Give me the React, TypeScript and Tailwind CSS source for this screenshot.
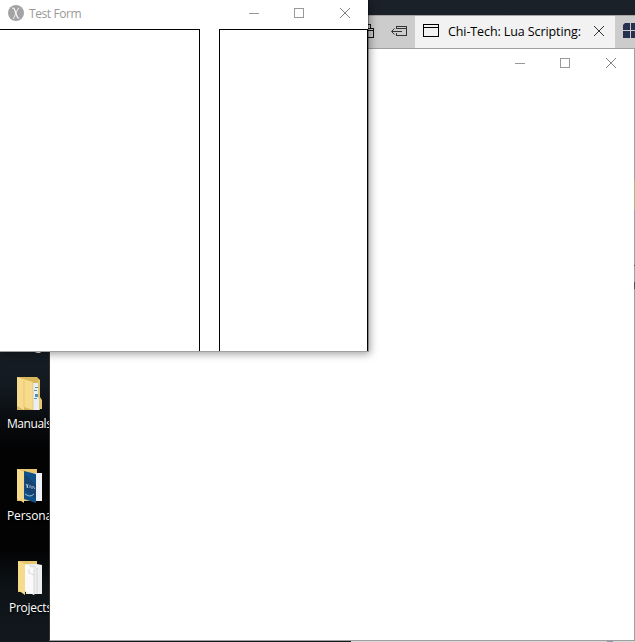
import type { ReactNode } from "react";

function WindowControls({ className = "" }: { className?: string }) {
  return (
    <div className={`flex items-center text-[#999] ${className}`}>
      <svg width="46" height="26" className="shrink-0" shapeRendering="crispEdges">
        <path d="M18 13.5h10" stroke="currentColor" />
      </svg>
      <svg width="45" height="26" className="shrink-0" shapeRendering="crispEdges">
        <rect x="17.5" y="8.5" width="9" height="9" fill="none" stroke="currentColor" />
      </svg>
      <svg width="46" height="26" className="shrink-0">
        <path d="M18 8l10 10M28 8l-10 10" stroke="#858585" strokeWidth="1" />
      </svg>
    </div>
  );
}

function DesktopItem({ label, className, labelClass, children }: { label: string; className: string; labelClass: string; children: ReactNode }) {
  return (
    <div className={`absolute flex w-[60px] flex-col text-white ${className}`}>
      <svg width="28" height="36" viewBox="0 0 28 36" className="ml-[9px]">
        {children}
      </svg>
      <span className={`mt-[4px] whitespace-nowrap text-[12px] leading-4 [text-shadow:1px_1px_2px_#000] ${labelClass}`}>{label}</span>
    </div>
  );
}

function TestForm() {
  return (
    <section className="absolute left-0 top-0 flex h-[352px] w-[369px] flex-col border-b border-r border-b-[#a0a0a0] border-r-[rgba(0,0,0,0.3)] bg-white bg-clip-padding shadow-[1px_2px_8px_rgba(0,0,0,0.38)]">
      <header className="flex h-[29px] shrink-0 items-start">
        <svg width="16" height="16" viewBox="0 0 16 16" className="ml-2 mt-[5px]">
          <circle cx="8" cy="8" r="8" fill="#a3a3a3" />
          <path d="M4.3 3.2Q6 2.6 6.8 5.2L9.1 11.5Q9.8 13.6 11.2 12.8" fill="none" stroke="#fff" strokeWidth="1.1" />
          <path d="M10.8 2.8Q8.7 6 7.8 8.3L5.4 14" fill="none" stroke="#fff" strokeWidth=".8" />
        </svg>
        <span className="ml-[5px] mt-[5px] text-[12px] leading-[18px] tracking-[-0.4px] text-[#999]">Test Form</span>
        <WindowControls className="ml-auto mr-0" />
      </header>
      <div className="flex min-h-0 flex-1 justify-between">
        <div className="w-[200px] border-r border-t border-black" />
        <div className="w-[149px] border-l border-r border-t border-black" />
      </div>
    </section>
  );
}

function BrowserTabs() {
  return (
    <header className="absolute left-[350px] right-0 top-[15px] flex h-[33px] border-t border-[#aaa3a3] bg-[#ccc]">
      <div className="flex w-[65px] shrink-0">
        <svg width="65" height="32" fill="none" stroke="#111" shapeRendering="crispEdges">
          <path d="M14 8.5h6.5V12M15 12.5h8.5V21.5H14M14 14.5h9" />
          <path d="M46.5 13V10.5H56.5V19.5H46.5V17M46 12.5h11M42 15.5h10" stroke="#333" />
          <path d="M44.5 12.5l-3 3 3 3" stroke="#333" shapeRendering="auto" />
        </svg>
      </div>
      <div className="flex h-[32px] w-[200px] shrink-0 items-center bg-[#f2f2f2]">
        <svg width="16" height="13" className="mb-[3px] ml-2" fill="none" stroke="#000" shapeRendering="crispEdges">
          <path d="M.5.5h15v12H.5zM1 3.5h14" />
        </svg>
        <span className="ml-[9px] w-[136px] whitespace-nowrap text-[12.5px] leading-5 tracking-[-0.1px] text-black">Chi-Tech: Lua Scripting:</span>
        <svg width="12" height="12" className="mb-[2px] ml-[9px]" fill="none" stroke="#333">
          <path d="M1 1l10 10M11 1L1 11" />
        </svg>
      </div>
      <div className="flex flex-1 overflow-hidden pl-2 pt-[7px]">
        <svg width="16" height="16" fill="#26304f" className="shrink-0">
          <path d="M2 0h5v7H0V2zM8 0h7v7H8zM0 8h7v7H0zM8 8h7v7H8z" />
        </svg>
      </div>
    </header>
  );
}

export default function App() {
  return (
    <main className="relative h-[642px] w-[635px] overflow-hidden bg-black bg-[linear-gradient(180deg,#1a2129_0px,#171e26_330px,#131a21_385px,#080a0c_425px,#030304_450px,#030304_550px,#0d1216_585px,#12181d_642px)] font-['Open_Sans','Noto_Sans',sans-serif]">
      <div className="absolute left-0 top-[338px] w-[50px] pl-[35px] text-[12px] leading-4 text-white">g</div>
      <DesktopItem label="Manuals" className="left-[7px] top-[376px]" labelClass="tracking-[-0.45px]">
        <path d="M1 1h20l3 3v30H1z" fill="#d8b65b" />
        <path d="M17 7h6v27h-6z" fill="#e9f0f5" />
        <path d="M19 11h3v1h-3zM18 14h3v1h-3zM19 18h3v3h-3zM18 22h3v1h-3z" fill="#4b91c1" />
        <path d="M22 4h2v17l2 3v9h-3V23l-1-1z" fill="#e8c66f" />
        <path d="M1 1l16 5v28L8 31v3L1 30z" fill="#f7db8c" />
        <path d="M8 4v27M17 6v28" stroke="#e3be66" strokeWidth=".7" />
      </DesktopItem>
      <DesktopItem label="Personal" className="left-[7px] top-[468px]" labelClass="tracking-[-0.1px]">
        <path d="M1 1h20v32H1z" fill="#e8c66f" />
        <path d="M15 5h11v28H15z" fill="#eef2f7" />
        <path d="M8 3l12 3v29L8 31z" fill="#11518a" />
        <path d="M9 6l11 11v14L9 22z" fill="#174271" />
        <path d="M10 16l2 4M12 16l-1 4M14 17v3M16 18v3M17 18l2 3M9 26q5 4 9 0" fill="none" stroke="#d5e8f8" strokeWidth=".7" />
        <path d="M1 1l7 3v31l-7-5z" fill="#f7db8c" />
      </DesktopItem>
      <DesktopItem label="Projects" className="left-[9px] top-[560px]" labelClass="tracking-[-0.25px]">
        <path d="M0 1h19v31H0z" fill="#e8c66f" />
        <path d="M8 4h11l5 1v29H8z" fill="#eee" />
        <path d="M7 4l9 5v26L7 31z" fill="#fafafa" />
        <path d="M12 6h4l3 3M11 9v4l5 2M16 9v26M19 8v25" fill="none" stroke="#d0d0d0" strokeWidth=".8" />
        <path d="M0 1l7 3v31l-7-5z" fill="#f7db8c" />
      </DesktopItem>
      <BrowserTabs />
      <div className="absolute bottom-0 left-[351px] right-0 flex h-[2px] bg-[#d7d7d7] pl-[256px]">
        <span className="w-[6px] bg-[#9497b0]" />
      </div>
      <section className="absolute left-[49px] top-[48px] h-[593px] w-[586px] border border-[#a0a0a0] border-l-[#333] bg-white">
        <WindowControls className="justify-end pt-[1px] mr-0" />
        <div className="absolute -right-px top-[131px] h-[30px] w-px bg-[#b2b681]" />
        <div className="absolute -right-px top-[216px] h-px w-px bg-[#555]" />
        <div className="absolute -right-px top-[233px] h-[7px] w-px bg-[#475364]" />
      </section>
      <TestForm />
    </main>
  );
}
